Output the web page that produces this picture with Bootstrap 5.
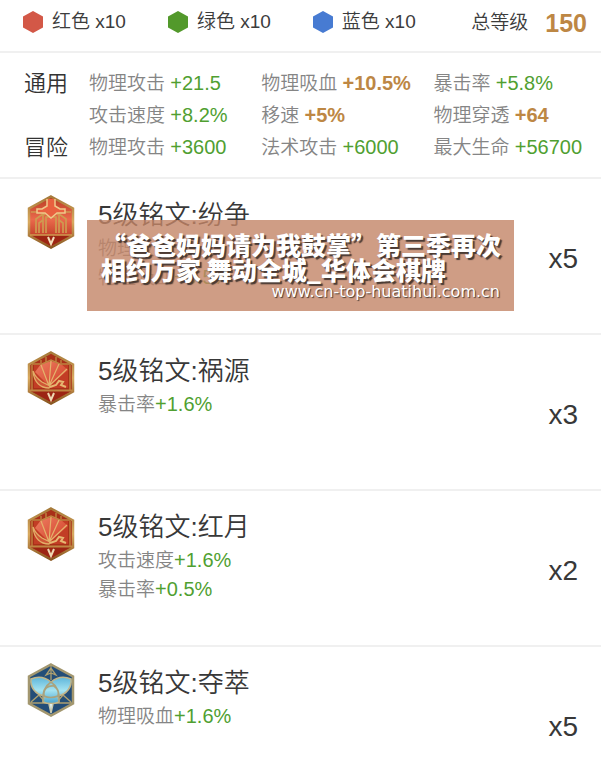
<!DOCTYPE html>
<html lang="zh-CN">
<head>
<meta charset="utf-8">
<meta name="viewport" content="width=device-width, initial-scale=1">
<title>铭文总览</title>
<link href="https://cdn.jsdelivr.net/npm/bootstrap@5.3.0/dist/css/bootstrap.min.css" rel="stylesheet">
<style>
body{font-family:"Liberation Sans","Noto Sans CJK SC",sans-serif;font-size:19px;line-height:32px;color:#3c3c3c;background:#fff;font-weight:350}
.rule{border-bottom:2px solid #f0f0f0}
.totals{height:53px;padding:0 14px 8px 23px}
.totals ul{gap:42px}
.totals li{gap:9px}
.level{gap:17px;padding-top:3px}
.level strong{font-size:25px;font-weight:700;color:#bd8744}
.stats{display:grid;grid-template-columns:65px 1fr 1fr auto;padding:15px 19px 13px 24px;line-height:32px}
.stats h2{font-size:22px;line-height:32px;font-weight:350;color:#333}
.stat-name{color:#858585}
.up{color:#509f31}
.gold{color:#bd8744;font-weight:700}
.up,.gold{font-size:20px;line-height:28px}
.rune{min-height:156px;padding:0 23px 0 27px;gap:23px}
.rune:last-child{min-height:112px}
.rune-icon{margin-top:16px;width:48px;height:54px}
.rune-text{padding-top:21px}
.rune-text h3{font-size:26px;line-height:30px;font-weight:350;margin-bottom:4px;color:#383838}
.rune-text p{line-height:29px}
.count{font-size:28px;line-height:42px;padding-top:59px;color:#383838}
.banner{left:87px;right:87px;top:220px;padding:12px 14px 10px 14px;background:rgba(195,133,103,.8);color:#fff;text-shadow:2px 2px 1px #493a33}
.banner-title{font-family:"Noto Sans CJK SC",sans-serif;font-size:25px;line-height:25px;font-weight:900;white-space:nowrap}
.banner-site{font-family:"DejaVu Sans",sans-serif;font-size:16px;line-height:19px;font-weight:400;text-shadow:1px 1px 1px #493a33}
</style>
<script src="https://cdn.jsdelivr.net/npm/bootstrap@5.3.0/dist/js/bootstrap.bundle.min.js"></script>
</head>
<body>
<svg class="position-absolute" width="0" height="0" aria-hidden="true">
<defs>
<linearGradient id="redFill" x2="0" y2="1"><stop stop-color="#b83b22"/><stop offset=".45" stop-color="#ea6a4c"/><stop offset="1" stop-color="#a92613"/></linearGradient>
<linearGradient id="fanFill" x2="1" y2="1"><stop stop-color="#ee7e62"/><stop offset="1" stop-color="#cf3f26"/></linearGradient>
<linearGradient id="blueFill" x2="0" y2="1"><stop stop-color="#5fb6da"/><stop offset=".5" stop-color="#a5e3f1"/><stop offset="1" stop-color="#4aa5cf"/></linearGradient>
<linearGradient id="goldLine" x2="0" y2="1"><stop stop-color="#a67a3a"/><stop offset=".5" stop-color="#d9aa60"/><stop offset="1" stop-color="#8a5721"/></linearGradient>
</defs>
<symbol id="gem" viewBox="0 0 20 22"><path d="M10 0l10 5.500v11L10 22 0 16.500v-11z"/></symbol>
<symbol id="strife" viewBox="0 0 48 54">
<path d="M24 1.500l22 12v27l-22 12-22-12v-27z" fill="url(#redFill)" stroke="url(#goldLine)" stroke-width="2.500"/>
<path d="M4 40h40L24 51z" fill="#9c2513"/>
<path d="M3 40h42M9 38V24l7-5v19M39 38V24l-7-5v19M12 38V28l4-3M36 38V28l-4-3M19 38V22h10v16M4 17h11l3 3M44 17H33l-3 3" fill="none" stroke="#cf9a50" stroke-width="1.700"/>
<path d="M20 4v7l-5 3h-5v4h8l6 5 6-5h8v-4h-5l-5-3V4" fill="#e9603f" stroke="#f0c98b" stroke-width="1.500"/>
<path d="M21 42l3 7 3-7" fill="none" stroke="#f4dfbb" stroke-width="2"/>
</symbol>
<symbol id="fan" viewBox="0 0 48 54">
<path d="M24 1.500l22 12v27l-22 12-22-12v-27z" fill="#a83018" stroke="url(#goldLine)" stroke-width="2.500"/>
<path d="M7 14h34v23H7z" fill="#c23d25"/>
<path d="M22 35L8 21l6-8 10-3 10 3 7 6z" fill="url(#fanFill)"/>
<path d="M5 39V14M43 14v25M5 13h10l9-4 9 4h10M14 9v3M19 6v5M29 6v5M34 9v3" fill="none" stroke="#bf8541" stroke-width="1.400"/>
<path d="M4 40h40L24 51z" fill="#9c2513"/>
<path d="M2 39.500h44" stroke="#bf8643" stroke-width="2"/>
<path d="M22 35L14 14M22 35l2-25M22 35l10-22M22 35l18-17" stroke="#e4b36c" stroke-width="1.200"/>
<path d="M6 20c2 6 6 9 9 11l8 4-1 2c-8 0-15-5-16-17z" fill="#cf5636" stroke="#e2ae68" stroke-width="1.300"/>
<path d="M23 36l6-2 3-4 4 1-2 3 5 2" fill="none" stroke="#e6b771" stroke-width="2"/>
<path d="M21 42l3 7 3-7" fill="none" stroke="#efd8b3" stroke-width="2"/>
</symbol>
<symbol id="knot" viewBox="0 0 48 54">
<path d="M24 1.500l22 12v27l-22 12-22-12v-27z" fill="#234d78" stroke="#a3976f" stroke-width="2.500"/>
<path d="M3 40h42M4 39l8-7 6 7M44 39l-8-7-6 7" fill="#254f76" stroke="#ad9f70" stroke-width="1.400"/>
<path d="M4 16c7-3 14-2 20 3 6-5 13-6 20-3 1 8-4 15-13 17l1 6c-5 2-11 2-16 0l1-6C8 31 3 24 4 16z" fill="url(#blueFill)" stroke="#c0b58a" stroke-width="1.600"/>
<path d="M24 19c6 4 9 11 8 20M24 19c-6 4-9 11-8 20M17 33c-1-7 4-11 10-10 4 3 5 7 4 10-5 2-10 2-14 0z" fill="none" stroke="#a9a37e" stroke-width="1.600"/>
<path d="M24 2v15M24 5l-5 7 5-2 5 2z" fill="#254f76" stroke="#ad9f70" stroke-width="1.300"/>
<path d="M22 41l2 9 2-9" fill="#dff0f0" stroke="#c8c9ad" stroke-width="1.500"/>
</symbol>
</svg>

<main class="position-relative">
<header class="totals rule d-flex align-items-center">
<ul class="list-unstyled d-flex mb-0">
<li class="d-flex align-items-center"><svg width="20" height="22" fill="#d35847"><use href="#gem"/></svg><span>红色 x10</span></li>
<li class="d-flex align-items-center"><svg width="20" height="22" fill="#52992b"><use href="#gem"/></svg><span>绿色 x10</span></li>
<li class="d-flex align-items-center"><svg width="20" height="22" fill="#477bd2"><use href="#gem"/></svg><span>蓝色 x10</span></li>
</ul>
<div class="level d-flex align-items-center ms-auto"><span>总等级</span><strong>150</strong></div>
</header>

<section class="stats rule">
<h2 class="mb-0">通用</h2>
<div><span class="stat-name">物理攻击</span> <span class="up">+21.5</span></div>
<div><span class="stat-name">物理吸血</span> <span class="gold">+10.5%</span></div>
<div><span class="stat-name">暴击率</span> <span class="up">+5.8%</span></div>
<span></span>
<div><span class="stat-name">攻击速度</span> <span class="up">+8.2%</span></div>
<div><span class="stat-name">移速</span> <span class="gold">+5%</span></div>
<div><span class="stat-name">物理穿透</span> <span class="gold">+64</span></div>
<h2 class="mb-0">冒险</h2>
<div><span class="stat-name">物理攻击</span> <span class="up">+3600</span></div>
<div><span class="stat-name">法术攻击</span> <span class="up">+6000</span></div>
<div><span class="stat-name">最大生命</span> <span class="up">+56700</span></div>
</section>

<section>
<article class="rune rule d-flex">
<svg class="rune-icon flex-shrink-0"><use href="#strife"/></svg>
<div class="rune-text flex-grow-1"><h3>5级铭文:纷争</h3>
<p class="mb-0"><span class="stat-name">物理攻击</span><span class="up">+3.2</span></p>
<p class="mb-0"><span class="stat-name">物理吸血</span><span class="up">+0.5%</span></p></div>
<div class="count">x5</div>
</article>
<article class="rune rule d-flex">
<svg class="rune-icon flex-shrink-0"><use href="#fan"/></svg>
<div class="rune-text flex-grow-1"><h3>5级铭文:祸源</h3>
<p class="mb-0"><span class="stat-name">暴击率</span><span class="up">+1.6%</span></p></div>
<div class="count">x3</div>
</article>
<article class="rune rule d-flex">
<svg class="rune-icon flex-shrink-0"><use href="#fan"/></svg>
<div class="rune-text flex-grow-1"><h3>5级铭文:红月</h3>
<p class="mb-0"><span class="stat-name">攻击速度</span><span class="up">+1.6%</span></p>
<p class="mb-0"><span class="stat-name">暴击率</span><span class="up">+0.5%</span></p></div>
<div class="count">x2</div>
</article>
<article class="rune d-flex">
<svg class="rune-icon flex-shrink-0"><use href="#knot"/></svg>
<div class="rune-text flex-grow-1"><h3>5级铭文:夺萃</h3>
<p class="mb-0"><span class="stat-name">物理吸血</span><span class="up">+1.6%</span></p></div>
<div class="count">x5</div>
</article>
</section>

<aside class="banner position-absolute">
<div class="banner-title">“爸爸妈妈请为我鼓掌”第三季再次<br>相约万家 舞动全城_华体会棋牌</div>
<div class="banner-site text-end">www.cn-top-huatihui.com.cn</div>
</aside>
</main>
</body>
</html>
